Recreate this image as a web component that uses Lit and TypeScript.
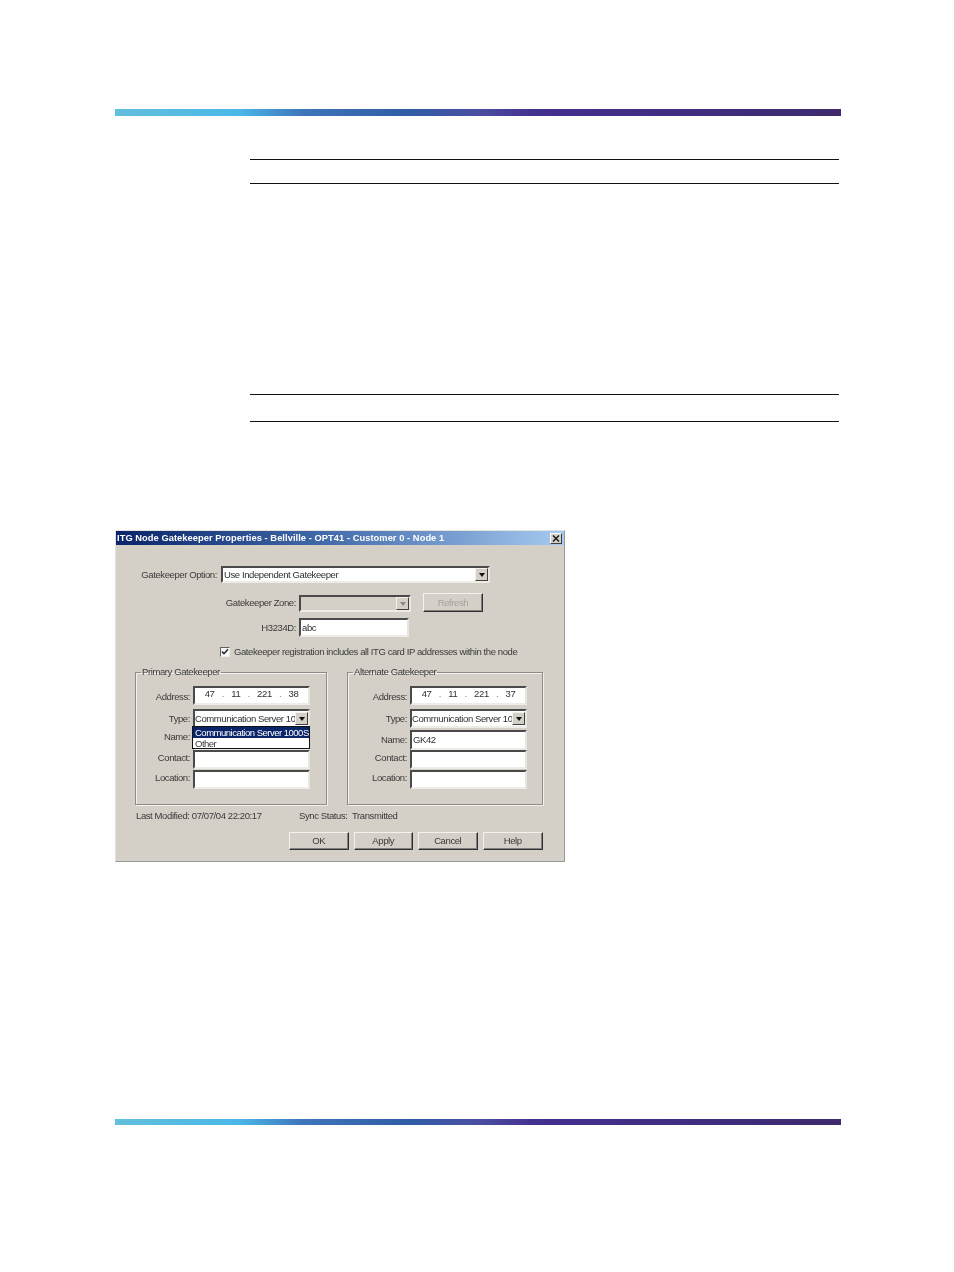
import { LitElement, html, css } from "lit";
import { customElement } from "lit/decorators.js";

@customElement("app-root")
export class AppRoot extends LitElement {
  static styles = css`
    :host { display: block; height: 1272px; background: #fefefe; overflow: hidden; font-family: "Liberation Sans", Arial, sans-serif; }
    .page { display: flex; flex-direction: column; padding: 109px 113px 0 115px; }
    .bar { height: 7px; background: linear-gradient(90deg, #62bfdc 0%, #4ab8e8 17%, #3f74b8 26%, #2f5ea6 40%, #4a4ea0 50%, #43308f 58%, #3f2d80 80%, #3e2a6c 100%); }
    .bottom { margin-top: 257px; height: 6px; }
    .rules { margin: 43px 2px 0 135px; display: flex; flex-direction: column; }
    .rule { height: 1px; background: #111; }
    .r2 { margin-top: 23px; }
    .r3 { margin-top: 210px; }
    .r4 { margin-top: 26px; }

    .dialog { margin-top: 108px; width: 448px; height: 330px; border: 1px solid #9a9a96; border-top-color: #e6e3dc; border-left-color: #e6e3dc; background: #d4d0c8; display: flex; flex-direction: column; font-size: 9.5px; letter-spacing: -0.4px; line-height: 12px; color: #3a3a3a; filter: blur(0.3px); white-space: nowrap; }
    .title { height: 14px; flex: none; display: flex; align-items: center; justify-content: space-between; padding: 0 2px 0 1px; background: linear-gradient(90deg, #0a246a 0%, #3f68a8 45%, #a6caf0 100%); color: #fff; font-weight: bold; font-size: 9.3px; letter-spacing: 0.06px; }
    .close { box-sizing: border-box; width: 12px; height: 11px; background: #d4d0c8; border: 1px solid; border-color: #fff #404040 #404040 #fff; display: flex; }
    .close svg { width: 10px; height: 9px; }

    .body { flex: 1; display: flex; flex-direction: column; padding: 0 21px 0 19px; }
    .row { display: flex; align-items: center; }
    .lbl { text-align: right; white-space: nowrap; }
    .sunken { box-sizing: border-box; background: #fff; border: 2px solid; border-color: #4a4a4a #e8e6e0 #eeece6 #4a4a4a; display: flex; align-items: center; padding-left: 1px; white-space: nowrap; overflow: hidden; color: #303030; }
    .disabled { background: #d4d0c8; }
    .arrow { flex: none; margin-left: auto; width: 13px; height: 13px; background: #d4d0c8; border: 1px solid; border-color: #f4f2ee #404040 #404040 #f4f2ee; box-sizing: border-box; display: flex; align-items: center; justify-content: center; }
    .arrow i { display: block; width: 0; height: 0; border: 3px solid transparent; border-top: 4px solid #111; border-bottom: 0; }
    .arrow.off i { border-top-color: #888; }
    .clip { overflow: hidden; flex: 1; min-width: 0; }

    .opt { margin-top: 21px; height: 17px; }
    .opt .lbl { width: 82px; margin-right: 4px; }
    .opt .sunken { width: 269px; height: 17px; }
    .zone { margin-top: 10px; height: 19px; }
    .wide { width: 161px; margin-right: 3px; }
    .zone .sunken { width: 112px; height: 17px; margin-top: 2px; }
    .btn { box-sizing: border-box; width: 60px; height: 18px; background: #d4d0c8; border: 1px solid; border-color: #f4f2ee #303030 #303030 #f4f2ee; box-shadow: inset -1px -1px 0 #808080; display: flex; align-items: center; justify-content: center; }
    .zone .btn { height: 19px; margin-left: 12px; color: #a4a29c; }
    .btn.help { width: 61px; }
    .h323 { margin-top: 6px; height: 19px; }
    .h323 .sunken { width: 110px; height: 19px; }
    .chk { margin-top: 10px; height: 10px; padding-left: 85px; gap: 4px; }
    .box { width: 10px; height: 10px; box-sizing: border-box; background: #f8f8f8; border: 1px solid; border-color: #606060 #eee #eee #606060; display: flex; }
    .box svg { width: 8px; height: 8px; }

    .groups { margin-top: 9px; display: grid; grid-template-columns: 192px 196px; column-gap: 20px; }
    fieldset { margin: 0; padding: 8px 0 0 0; min-width: 0; border: 1px solid #8e8c86; box-shadow: 1px 1px 0 #f4f2ee, inset 1px 1px 0 #f4f2ee; height: 139px; box-sizing: border-box; }
    legend { margin-left: 5px; padding: 0 1px; line-height: 12px; height: 12px; }
    .fields { display: grid; grid-template-rows: 23px 21px 20px 20px 19px; }
    .fields .clip { margin-left: -1px; }
    .a .fields { grid-template-columns: 117px; padding-left: 57px; }
    .b .fields { grid-template-columns: 117px; padding-left: 62px; }
    .f { position: relative; height: 19px; }
    .f .sunken { height: 100%; }
    .f .lbl { position: absolute; right: calc(100% + 3px); top: 4px; }
    .addr .lbl { top: 5px; }
    .up .lbl { top: 2px; }
    .name-a .lbl { top: 1px; }
    .tall { height: 20px; }
    .ip { justify-content: space-around; padding: 0 6px 3px 6px; }
    .dots { color: #808080; }
    .menu { position: absolute; left: -1px; right: 0; top: -4px; height: 23px; box-sizing: border-box; background: #fff; border: 1px solid #111; z-index: 2; letter-spacing: -0.5px; }
    .menu div { height: 10px; line-height: 11px; padding-left: 2px; }
    .menu .sel { height: 11px; background: #0a246a; color: #fff; }

    .status { margin-top: 5px; height: 12px; padding-left: 1px; }
    .status .lm { width: 163px; }
    .status .ss { width: 53px; }
    .btns { margin-top: 10px; gap: 5px; padding-left: 154px; }
  `;

  private combo(text: string, off = false) {
    return html`<div class="sunken ${off ? "disabled" : ""}"><span class="clip">${text}</span><span class="arrow ${off ? "off" : ""}"><i></i></span></div>`;
  }
  private ip(parts: string[]) {
    return html`<div class="sunken ip">
      <span>${parts[0]}</span><span class="dots">.</span><span>${parts[1]}</span><span class="dots">.</span><span>${parts[2]}</span><span class="dots">.</span><span>${parts[3]}</span>
    </div>`;
  }
  private field(label: string, content: unknown, cls = "") {
    return html`<div class="f ${cls}"><span class="lbl">${label}</span>${content}</div>`;
  }

  render() {
    return html`<div class="page">
      <div class="bar"></div>
      <div class="rules">
        <div class="rule"></div>
        <div class="rule r2"></div>
        <div class="rule r3"></div>
        <div class="rule r4"></div>
      </div>
      <div class="dialog">
        <div class="title">
          <span>ITG Node Gatekeeper Properties - Bellville - OPT41 - Customer 0 - Node 1</span>
          <span class="close"><svg viewBox="0 0 10 9"><path d="M2 1.5l6 6M8 1.5l-6 6" stroke="#111" stroke-width="1.3" fill="none"/></svg></span>
        </div>
        <div class="body">
          <div class="row opt"><span class="lbl">Gatekeeper Option:</span>${this.combo("Use Independent Gatekeeper")}</div>
          <div class="row zone">
            <span class="lbl wide">Gatekeeper Zone:</span>
            ${this.combo("", true)}
            <span class="btn">Refresh</span>
          </div>
          <div class="row h323"><span class="lbl wide">H3234D:</span><div class="sunken">abc</div></div>
          <div class="row chk">
            <span class="box"><svg viewBox="0 0 8 8"><path d="M1 3.5l2 2.2L7 1.2" stroke="#222" stroke-width="1.5" fill="none"/></svg></span>
            <span>Gatekeeper registration includes all ITG card IP addresses within the node</span>
          </div>
          <div class="groups">
            <fieldset class="a">
              <legend>Primary Gatekeeper</legend>
              <div class="fields">
                ${this.field("Address:", this.ip(["47", "11", "221", "38"]), "addr")}
                ${this.field("Type:", this.combo("Communication Server 1000S"))}
                ${this.field("Name:", html`<div class="sunken"></div><div class="menu"><div class="sel">Communication Server 1000S</div><div>Other</div></div>`, "tall name-a")}
                ${this.field("Contact:", html`<div class="sunken"></div>`, "up")}
                ${this.field("Location:", html`<div class="sunken"></div>`, "up")}
              </div>
            </fieldset>
            <fieldset class="b">
              <legend>Alternate Gatekeeper</legend>
              <div class="fields">
                ${this.field("Address:", this.ip(["47", "11", "221", "37"]), "addr")}
                ${this.field("Type:", this.combo("Communication Server 1000S"))}
                ${this.field("Name:", html`<div class="sunken">GK42</div>`, "tall")}
                ${this.field("Contact:", html`<div class="sunken"></div>`, "up")}
                ${this.field("Location:", html`<div class="sunken"></div>`, "up")}
              </div>
            </fieldset>
          </div>
          <div class="row status">
            <span class="lm">Last Modified: 07/07/04 22:20:17</span>
            <span class="ss">Sync Status:</span>
            <span>Transmitted</span>
          </div>
          <div class="row btns">
            <span class="btn">OK</span><span class="btn">Apply</span><span class="btn">Cancel</span><span class="btn help">Help</span>
          </div>
        </div>
      </div>
      <div class="bar bottom"></div>
    </div>`;
  }
}
